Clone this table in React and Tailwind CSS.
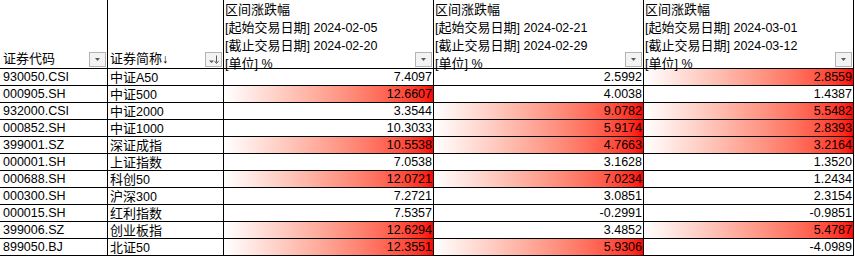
import React from 'react';

const rows = [
  ['930050.CSI', '中证A50', '7.4097', '2.5992', '2.8559', [0, 0, 1]],
  ['000905.SH', '中证500', '12.6607', '4.0038', '1.4387', [1, 0, 0]],
  ['932000.CSI', '中证2000', '3.3544', '9.0782', '5.5482', [0, 1, 1]],
  ['000852.SH', '中证1000', '10.3033', '5.9174', '2.8393', [0, 1, 1]],
  ['399001.SZ', '深证成指', '10.5538', '4.7663', '3.2164', [1, 1, 1]],
  ['000001.SH', '上证指数', '7.0538', '3.1628', '1.3520', [0, 0, 0]],
  ['000688.SH', '科创50', '12.0721', '7.0234', '1.2434', [1, 1, 0]],
  ['000300.SH', '沪深300', '7.2721', '3.0851', '2.3154', [0, 0, 0]],
  ['000015.SH', '红利指数', '7.5357', '-0.2991', '-0.9851', [0, 0, 0]],
  ['399006.SZ', '创业板指', '12.6294', '3.4852', '5.4787', [1, 0, 1]],
  ['899050.BJ', '北证50', '12.3551', '5.9306', '-4.0989', [1, 1, 0]],
];

const periods = [
  ['2024-02-05', '2024-02-20'],
  ['2024-02-21', '2024-02-29'],
  ['2024-03-01', '2024-03-12'],
];

// 한자 부분만 조금 크게 (엑셀 화면처럼)
const Txt = ({ children }) => {
  const parts = String(children).split(/([\u4e00-\u9fff]+)/);
  return (
    <>
      {parts.map((p, i) =>
        /[\u4e00-\u9fff]/.test(p) ? (
          <span key={i} className="text-[13px]">{p}</span>
        ) : (
          <React.Fragment key={i}>{p}</React.Fragment>
        )
      )}
    </>
  );
};

// 필터 버튼 (엑셀 자동 필터)
const FilterButton = ({ sorted }) => (
  <div className="absolute right-[1px] bottom-[1px] w-[17px] h-[15px] bg-[#f3f3f3] border border-[#b4b4b4] flex items-center justify-center">
    <svg width="13" height="11" viewBox="0 0 13 11">
      {sorted ? (
        <>
          <path d="M2 6.5h5l-2.5 2.5z" fill="#5a5a5a" />
          <path d="M9.5 1.5v7" stroke="#5a5a5a" strokeWidth="1" />
          <path d="M7.5 7l2 2.5 2-2.5" fill="none" stroke="#5a5a5a" strokeWidth="1" />
        </>
      ) : (
        <path d="M4 4h5l-2.5 3z" fill="#5a5a5a" />
      )}
    </svg>
  </div>
);

const App = () => {
  return (
    <div
      className="w-[855px] h-[256px] bg-white text-black text-[12.5px] leading-[17px] overflow-hidden"
      style={{ fontFamily: '"Liberation Sans", Arial, "Noto Sans CJK SC", sans-serif' }}
    >
      <div className="grid grid-cols-[108px_116px_210px_210px_210px]">
        {/* 헤더 */}
        <div className="relative h-[69px] border-r border-b border-black flex flex-col justify-end pl-[3px]">
          <span><Txt>证券代码</Txt></span>
          <FilterButton />
        </div>
        <div className="relative h-[69px] border-r border-b border-black flex flex-col justify-end pl-[2px]">
          <span><Txt>证券简称↓</Txt></span>
          <FilterButton sorted />
        </div>
        {periods.map(([from, to], i) => (
          <div key={i} className="relative h-[69px] border-r border-b border-black pl-[1px] pt-[1px] whitespace-nowrap">
            <div><Txt>区间涨跌幅</Txt></div>
            <div><Txt>{`[起始交易日期] ${from}`}</Txt></div>
            <div><Txt>{`[截止交易日期] ${to}`}</Txt></div>
            <div><Txt>[单位] %</Txt></div>
            <FilterButton />
          </div>
        ))}

        {/* 데이터 행 */}
        {rows.map((r, i) => (
          <React.Fragment key={i}>
            <div className="h-[17px] border-r border-b border-black pl-[3px] whitespace-nowrap">{r[0]}</div>
            <div className="h-[17px] border-r border-b border-black pl-[2px] whitespace-nowrap"><Txt>{r[1]}</Txt></div>
            {[r[2], r[3], r[4]].map((v, j) => (
              <div
                key={j}
                className={`h-[17px] border-r border-b border-black pr-[1px] text-right ${
                  r[5][j] ? 'bg-gradient-to-r from-white to-[#ff0000]' : ''
                }`}
              >
                {v}
              </div>
            ))}
          </React.Fragment>
        ))}
      </div>
    </div>
  );
};

export default App;
